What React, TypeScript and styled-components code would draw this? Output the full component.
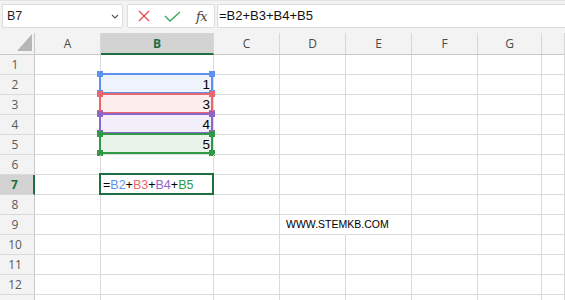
import React from 'react';
import styled, { createGlobalStyle } from 'styled-components';

const GlobalStyle = createGlobalStyle`
  html, body {
    margin: 0;
    padding: 0;
    background: #ffffff;
  }
  body {
    font-family: 'Liberation Sans', Arial, sans-serif;
  }
`;

const Window = styled.div`
  width: 565px;
  height: 300px;
  overflow: hidden;
  background: #ffffff;
`;

const Toolbar = styled.div`
  height: 33px;
  box-sizing: border-box;
  background: #f3f3f3;
  border-top: 1px solid #e4e4e4;
  padding: 3px 0 0 2px;
  display: flex;
  align-items: flex-start;
`;

const NameBox = styled.div`
  width: 121px;
  height: 24px;
  box-sizing: border-box;
  background: #ffffff;
  border: 1px solid #dcdcdc;
  border-radius: 2px;
  display: flex;
  align-items: center;
  justify-content: space-between;
  padding: 0 3px 0 4px;
  font-size: 12.5px;
  color: #1f1f1f;
`;

const IconBox = styled.div`
  width: 88px;
  height: 24px;
  margin-left: 4px;
  box-sizing: border-box;
  background: #ffffff;
  border: 1px solid #dcdcdc;
  border-radius: 2px;
  display: flex;
  align-items: center;
  padding-left: 10px;
  gap: 14px;
`;

const Fx = styled.span`
  font-family: 'DejaVu Serif', 'Liberation Serif', serif;
  font-style: italic;
  font-size: 13px;
  color: #444444;
  margin-left: 1px;
  letter-spacing: -0.5px;
`;

const FormulaInput = styled.div`
  flex: 1;
  height: 24px;
  margin-left: 2px;
  box-sizing: border-box;
  background: #ffffff;
  border: 1px solid #dcdcdc;
  border-right: none;
  padding-left: 1px;
  font-size: 13px;
  line-height: 22px;
  color: #111111;
`;

const Sheet = styled.div`
  display: grid;
  grid-template-columns: 35px 66px 113px 66px 66px 66px 66px 64px 1fr;
  grid-template-rows: 22px repeat(13, 20px);
  height: 267px;
  overflow: hidden;
`;

const Corner = styled.div`
  box-sizing: border-box;
  background: #f3f3f3;
  border-right: 1px solid #c8c8c8;
  border-bottom: 1px solid #c8c8c8;
  display: flex;
  align-items: flex-end;
  justify-content: flex-end;
  padding: 0 2px 3px 0;
`;

const Triangle = styled.div`
  width: 15px;
  height: 17px;
  background: #b6b6b6;
  clip-path: polygon(100% 0, 100% 100%, 0 100%);
`;

const ColHead = styled.div<{ $active?: boolean }>`
  box-sizing: border-box;
  background: ${p => (p.$active ? '#d3d3d3' : '#f3f3f3')};
  border-right: 1px solid #d6d6d6;
  border-bottom: ${p => (p.$active ? '2px solid #1e6e42' : '1px solid #c8c8c8')};
  font-family: 'Open Sans', 'Noto Sans', sans-serif;
  font-size: 12px;
  font-weight: ${p => (p.$active ? 700 : 400)};
  color: ${p => (p.$active ? '#1e6e42' : '#4a4a4a')};
  text-align: center;
  line-height: 21px;
`;

const RowHead = styled.div<{ $active?: boolean }>`
  box-sizing: border-box;
  background: ${p => (p.$active ? '#d3d3d3' : '#f3f3f3')};
  border-right: ${p => (p.$active ? '2px solid #1e6e42' : '1px solid #c8c8c8')};
  border-bottom: 1px solid #dadada;
  font-family: 'Open Sans', 'Noto Sans', sans-serif;
  font-size: 12px;
  font-weight: ${p => (p.$active ? 700 : 400)};
  color: ${p => (p.$active ? '#1e6e42' : '#5a5a5a')};
  text-align: center;
  padding-right: 4px;
  line-height: 19px;
`;

const Cell = styled.div<{ $fill?: string; $right?: boolean; $noRight?: boolean; $small?: boolean }>`
  position: relative;
  box-sizing: border-box;
  border-right: 1px solid ${p => (p.$noRight ? 'transparent' : '#dadada')};
  border-bottom: 1px solid #dadada;
  background: ${p => p.$fill ?? 'transparent'};
  font-size: ${p => (p.$small ? '10.5px' : '13.5px')};
  line-height: 19px;
  padding: ${p => (p.$right ? '0 3px 0 2px' : p.$small ? '0 0 0 6px' : '0 0 0 2px')};
  text-align: ${p => (p.$right ? 'right' : 'left')};
  white-space: nowrap;
  color: #000000;
`;

const RangeBox = styled.div<{ $color: string }>`
  position: absolute;
  inset: -2px 0 0 -2px;
  border: 2px solid ${p => p.$color};
  pointer-events: none;
`;

const Handle = styled.span<{ $color: string; $v: 'top' | 'bottom'; $h: 'left' | 'right' }>`
  position: absolute;
  width: 6px;
  height: 6px;
  background: ${p => p.$color};
  ${p => p.$v}: -4px;
  ${p => p.$h}: -4px;
`;

const ActiveBox = styled.div`
  position: absolute;
  inset: -2px -1px -1px -2px;
  border: 2px solid #1e6e42;
  pointer-events: none;
`;

const CellText = styled.span`
  position: relative;
  font-size: 12.5px;
`;

const Ref = styled.span<{ $color: string }>`
  color: ${p => p.$color};
`;

type RangeColor = { line: string; fill: string };

const ranges: Record<string, RangeColor> = {
  blue: { line: '#5f92ee', fill: '#eef3fd' },
  red: { line: '#e9666c', fill: '#fdeeee' },
  purple: { line: '#8e66c9', fill: '#f3effa' },
  green: { line: '#2f9a45', fill: '#eaf3ea' },
};

const values: Record<string, { v: string; range: keyof typeof ranges }> = {
  B2: { v: '1', range: 'blue' },
  B3: { v: '3', range: 'red' },
  B4: { v: '4', range: 'purple' },
  B5: { v: '5', range: 'green' },
};

const columns = ['A', 'B', 'C', 'D', 'E', 'F', 'G', ''];
const rows = Array.from({ length: 13 }, (_, i) => i + 1);

const Chevron = () => (
  <svg width="8" height="5" viewBox="0 0 8 5">
    <polyline points="1,1 4,4 7,1" fill="none" stroke="#555" strokeWidth="1.1" />
  </svg>
);

const CancelIcon = () => (
  <svg width="12" height="12" viewBox="0 0 12 12">
    <path d="M1 1 L11 11 M11 1 L1 11" stroke="#e2474d" strokeWidth="1.2" fill="none" />
  </svg>
);

const EnterIcon = () => (
  <svg width="17" height="11" viewBox="0 0 17 11">
    <polyline points="1,5 6,10 16,1" stroke="#3aa655" strokeWidth="1.3" fill="none" />
  </svg>
);

const Formula = () => (
  <CellText>
    =<Ref $color={ranges.blue.line}>B2</Ref>+<Ref $color={ranges.red.line}>B3</Ref>+
    <Ref $color={ranges.purple.line}>B4</Ref>+<Ref $color={ranges.green.line}>B5</Ref>
  </CellText>
);

const App: React.FC = () => {
  return (
    <Window>
      <GlobalStyle />
      <Toolbar>
        <NameBox>
          <span>B7</span>
          <Chevron />
        </NameBox>
        <IconBox>
          <CancelIcon />
          <EnterIcon />
          <Fx>fx</Fx>
        </IconBox>
        <FormulaInput>=B2+B3+B4+B5</FormulaInput>
      </Toolbar>

      <Sheet>
        <Corner>
          <Triangle />
        </Corner>
        {columns.map((c, i) => (
          <ColHead key={`h${i}`} $active={c === 'B'}>
            {c}
          </ColHead>
        ))}

        {rows.map(r => (
          <React.Fragment key={r}>
            {/* row 13 is only peeking in at the bottom edge, its label is hidden */}
            <RowHead $active={r === 7}>{r < 13 ? r : ''}</RowHead>
            {columns.map((c, ci) => {
              const id = `${c}${r}`;
              const data = values[id];
              if (data) {
                const rc = ranges[data.range];
                return (
                  <Cell key={ci} $fill={rc.fill} $right>
                    {data.v}
                    <RangeBox $color={rc.line}>
                      <Handle $color={rc.line} $v="top" $h="left" />
                      <Handle $color={rc.line} $v="top" $h="right" />
                      <Handle $color={rc.line} $v="bottom" $h="left" />
                      <Handle $color={rc.line} $v="bottom" $h="right" />
                    </RangeBox>
                  </Cell>
                );
              }
              if (id === 'B7') {
                return (
                  <Cell key={ci}>
                    <Formula />
                    <ActiveBox />
                  </Cell>
                );
              }
              if (id === 'D9') {
                return (
                  <Cell key={ci} $small $noRight>
                    WWW.STEMKB.COM
                  </Cell>
                );
              }
              return <Cell key={ci} />;
            })}
          </React.Fragment>
        ))}
      </Sheet>
    </Window>
  );
};

export default App;
